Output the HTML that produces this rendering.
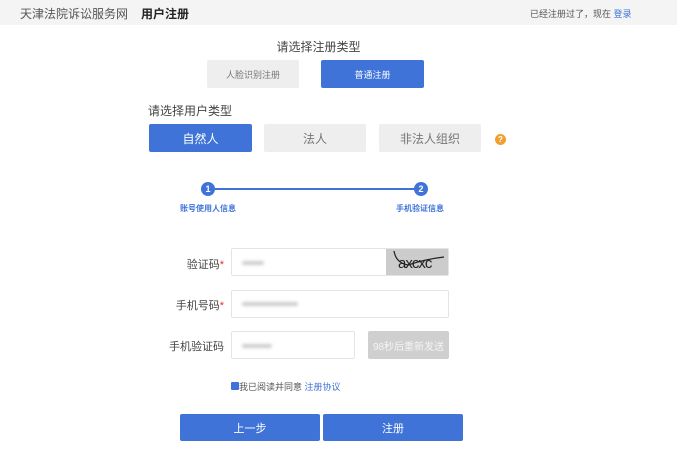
<!DOCTYPE html>
<html><head><meta charset="utf-8"><style>
*{margin:0;padding:0;box-sizing:border-box}
body{width:677px;height:471px;background:#fff;font-family:"Liberation Sans","Noto Sans CJK SC",sans-serif;position:relative;overflow:hidden;color:#333}
.a{position:absolute}
.hdr{left:0;top:0;width:677px;height:25px;background:#f4f4f4}
.btn{position:absolute;display:flex;align-items:center;justify-content:center}
.g{background:#eeeeee;color:#777;border-radius:2px}
.b{background:#3f73d8;color:#fff;border-radius:2px}
.inp{position:absolute;border:1px solid #e4e4e4;background:#fff;border-radius:2px}
.lbl{position:absolute;font-size:11px;color:#444;text-align:right;width:90px}
.blur{position:absolute;height:4px;background:#ccc;filter:blur(1.5px);border-radius:2px}
.st{color:#d33}
</style></head><body>
<div class="a hdr"></div>
<div class="a" style="left:20px;top:5px;font-size:12px;color:#555">天津法院诉讼服务网</div>
<div class="a" style="left:141px;top:5px;font-size:12px;font-weight:bold;color:#222">用户注册</div>
<div class="a" style="left:530px;top:7px;font-size:9px;color:#555">已经注册过了，现在 <span style="color:#3f73d8">登录</span></div>

<div class="a" style="left:0;width:637px;top:38px;text-align:center;font-size:12px;color:#444">请选择注册类型</div>
<div class="btn g" style="left:207px;top:60px;width:92px;height:28px;font-size:9px">人脸识别注册</div>
<div class="btn b" style="left:321px;top:60px;width:103px;height:28px;font-size:9px">普通注册</div>

<div class="a" style="left:148px;top:102px;font-size:12px;color:#444">请选择用户类型</div>
<div class="btn b" style="left:149px;top:124px;width:103px;height:28px;font-size:12px">自然人</div>
<div class="btn g" style="left:264px;top:124px;width:102px;height:28px;font-size:12px">法人</div>
<div class="btn g" style="left:379px;top:124px;width:102px;height:28px;font-size:12px">非法人组织</div>
<div class="btn" style="left:495px;top:134px;width:11px;height:11px;border-radius:50%;background:#f0a030;color:#fff;font-size:8px;font-weight:bold">?</div>

<div class="a" style="left:208px;top:188px;width:213px;height:2px;background:#3f73d8"></div>
<div class="btn" style="left:201px;top:182px;width:14px;height:14px;border-radius:50%;background:#3f73d8;color:#fff;font-size:9px;font-weight:bold">1</div>
<div class="btn" style="left:414px;top:182px;width:14px;height:14px;border-radius:50%;background:#3f73d8;color:#fff;font-size:9px;font-weight:bold">2</div>
<div class="a" style="left:180px;top:203px;font-size:8px;color:#3f73d8;font-weight:bold">账号使用人信息</div>
<div class="a" style="left:396px;top:203px;font-size:8px;color:#3f73d8;font-weight:bold">手机验证信息</div>

<div class="lbl" style="left:134px;top:256px">验证码<span class="st">*</span></div>
<div class="inp" style="left:231px;top:248px;width:218px;height:28px"></div>
<div class="blur" style="left:242px;top:261px;width:22px"></div>
<div class="a" style="left:386px;top:249px;width:62px;height:26px;background:#ccc;font-family:'Liberation Sans',sans-serif;font-size:15px;color:#222;padding-left:12px;line-height:30px;letter-spacing:-1px">axcxc</div>
<svg class="a" style="left:386px;top:249px" width="62" height="26"><path d="M8 2 Q10 14 22 16 Q40 10 58 8" stroke="#222" stroke-width="1.2" fill="none"/></svg>

<div class="lbl" style="left:134px;top:297px">手机号码<span class="st">*</span></div>
<div class="inp" style="left:231px;top:290px;width:218px;height:28px"></div>
<div class="blur" style="left:242px;top:302px;width:56px"></div>

<div class="lbl" style="left:134px;top:338px">手机验证码</div>
<div class="inp" style="left:231px;top:331px;width:124px;height:28px"></div>
<div class="blur" style="left:242px;top:344px;width:30px"></div>
<div class="btn" style="left:368px;top:331px;width:81px;height:28px;background:#cfcfcf;color:#f4f4f4;font-size:10px;border-radius:2px">98秒后重新发送</div>

<div class="a" style="left:231px;top:382px;width:8px;height:8px;background:#3f73d8;border-radius:1px"></div>
<div class="a" style="left:239px;top:380px;font-size:9px;color:#555">我已阅读并同意 <span style="color:#3f73d8">注册协议</span></div>

<div class="btn b" style="left:180px;top:414px;width:140px;height:27px;font-size:11px">上一步</div>
<div class="btn b" style="left:323px;top:414px;width:140px;height:27px;font-size:11px">注册</div>
</body></html>
